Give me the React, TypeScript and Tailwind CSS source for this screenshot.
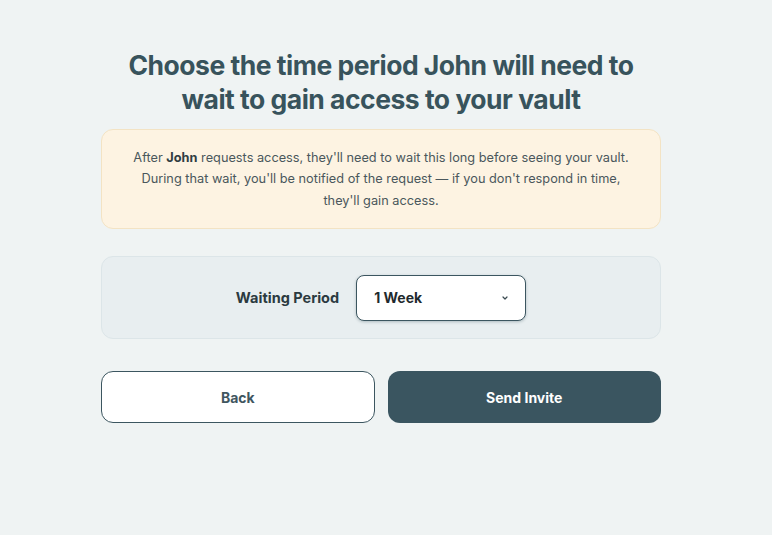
import React from "react";

const font = { fontFamily: "Inter, 'Noto Sans', sans-serif" };

function Chevron() {
  return (
    <svg width="10" height="10" viewBox="0 0 10 10" fill="none" aria-hidden="true">
      <path d="M3 4l2 2 2-2" stroke="#3a4a50" strokeWidth="1.2" strokeLinecap="round" strokeLinejoin="round" />
    </svg>
  );
}

export default function App() {
  return (
    <div className="min-h-[535px] w-full bg-[#eff3f3] flex justify-center pr-[10px]" style={font}>
      <div className="w-[560px] pt-[48px] flex flex-col">
        <h1 className="text-center text-[26.5px] leading-[34px] font-bold tracking-[-0.5px] text-[#38535c]">
          Choose the time period John will need to
          <br />
          wait to gain access to your vault
        </h1>

        <div className="mt-[13px] h-[100px] rounded-xl border border-[#f3e3c4] bg-[#fdf3e2] flex items-center justify-center px-6">
          <p className="text-center text-[12.75px] leading-[21.5px] text-[#4a575c]">
            After <span className="font-bold text-[#2f3d42]">John</span> requests access, they'll need to wait this long before seeing your vault.
            <br />
            During that wait, you'll be notified of the request — if you don't respond in time,
            <br />
            they'll gain access.
          </p>
        </div>

        <div className="mt-[27px] h-[83px] rounded-xl border border-[#dce5e8] bg-[#e8eef0] flex items-center justify-center gap-[17px]">
          <span className="text-[14.5px] font-bold text-[#2b3a40]">Waiting Period</span>
          <div className="w-[170px] h-[46px] rounded-lg border border-[#3c5660] bg-white shadow-[0_1px_3px_rgba(40,70,80,0.3)] flex items-center justify-between pl-[17px] pr-[15px]">
            <span className="text-[14px] font-bold text-[#1f2a2e]">1 Week</span>
            <Chevron />
          </div>
        </div>

        <div className="mt-[32px] grid grid-cols-2 gap-[13px]">
          <button className="h-[52px] rounded-xl border border-[#3c5660] bg-white text-[14px] font-bold text-[#3f5660]">
            Back
          </button>
          <button className="h-[52px] rounded-xl bg-[#3a5560] text-[14px] font-bold text-white">
            Send Invite
          </button>
        </div>
      </div>
    </div>
  );
}
